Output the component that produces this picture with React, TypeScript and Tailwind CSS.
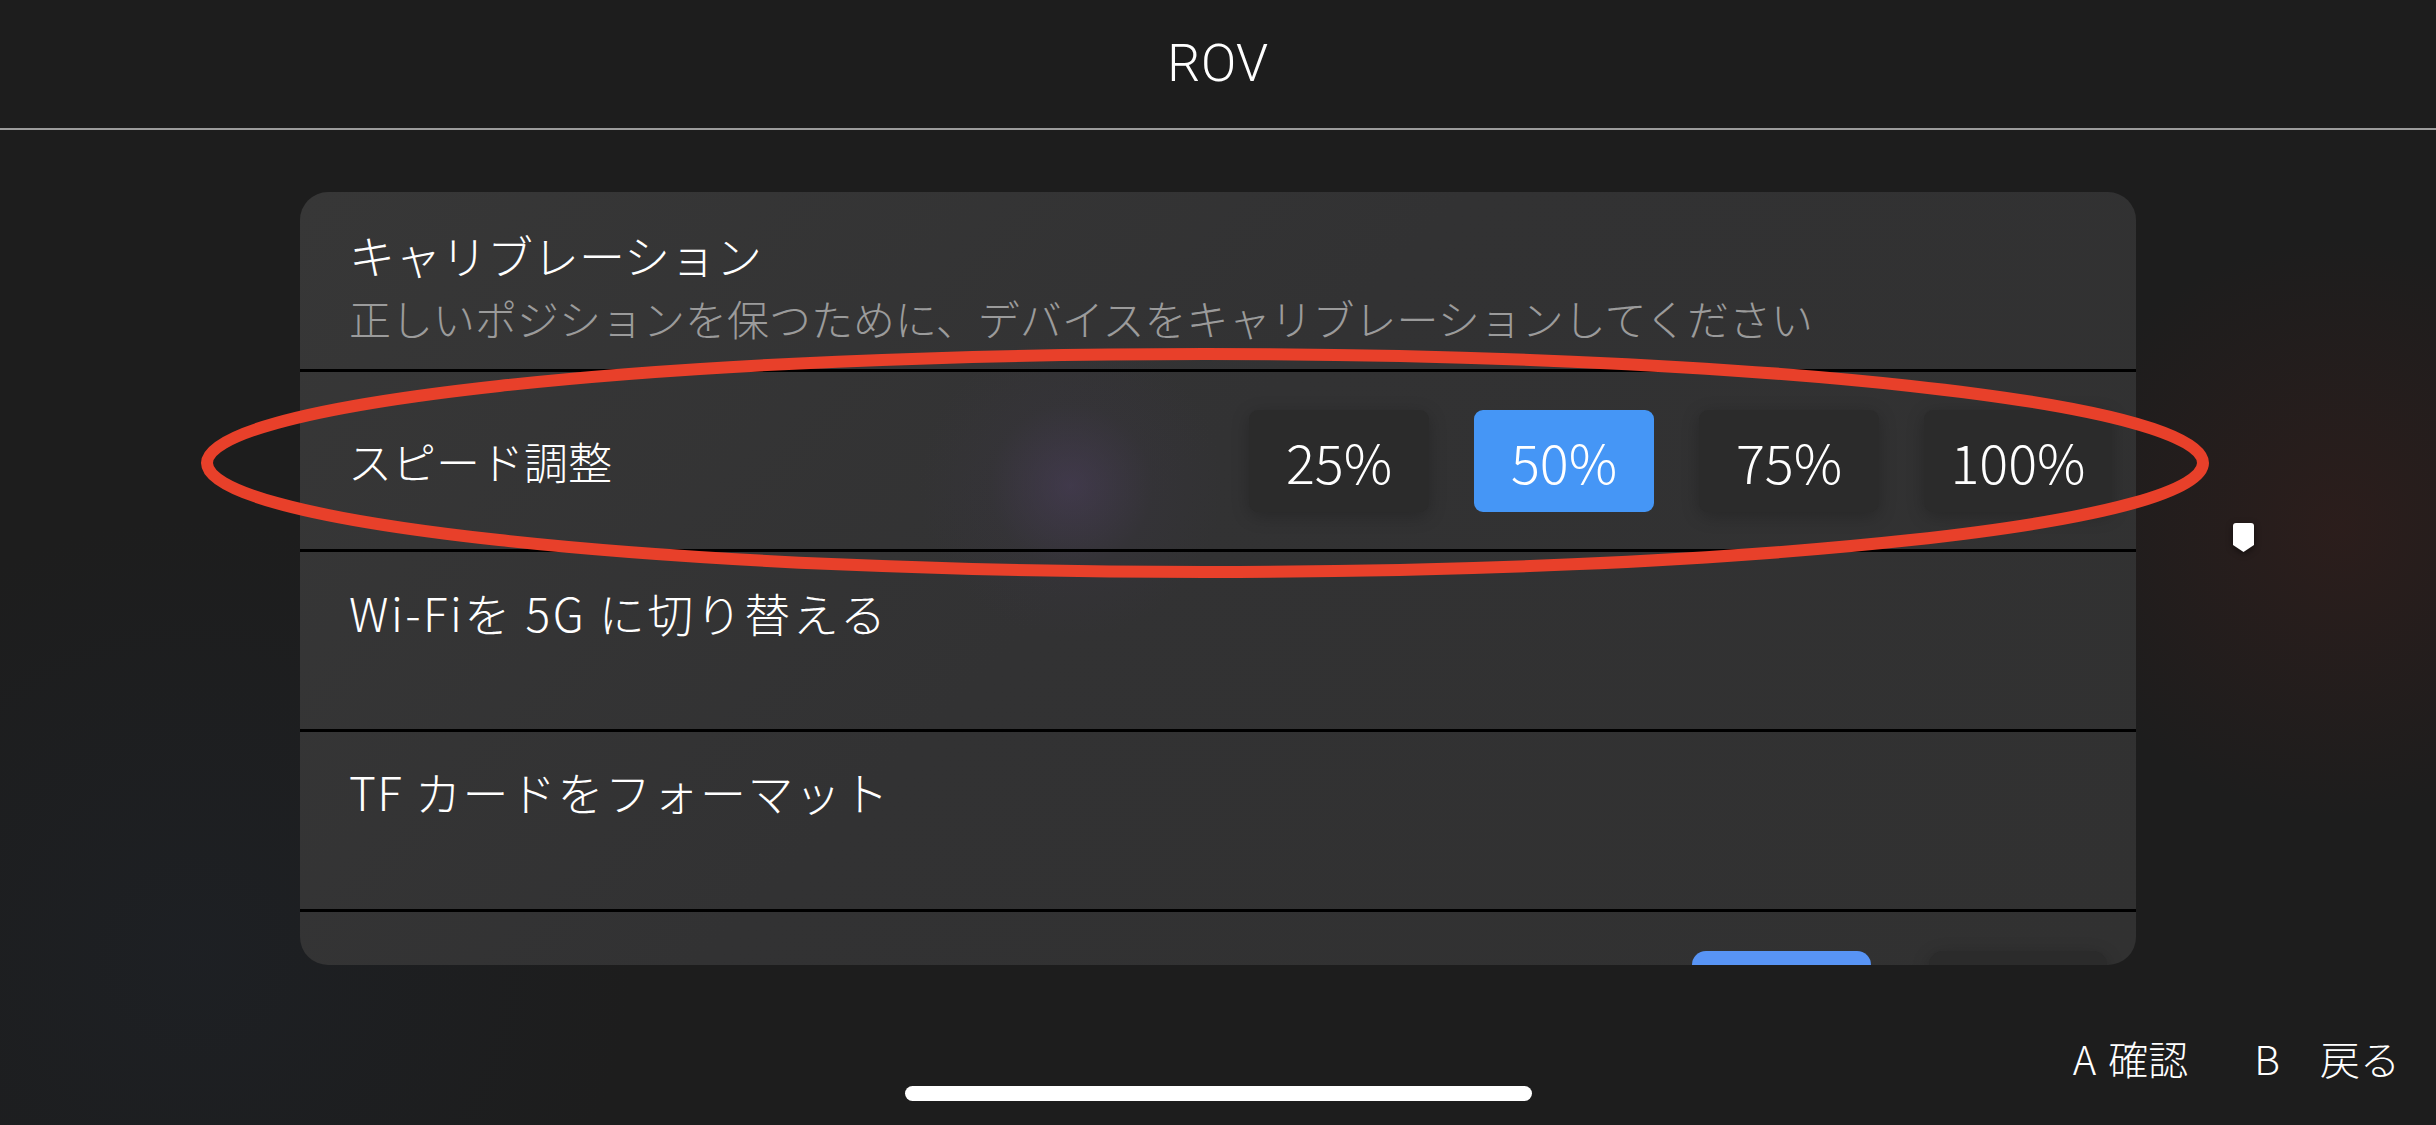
import React from 'react'

const jp = "font-['Noto_Sans_CJK_JP','Noto_Sans',sans-serif]"

function PercentButton({ label, active, wide }: { label: string; active?: boolean; wide?: boolean }) {
  return (
    <div
      className={
        (wide ? 'w-[188px] ' : 'w-[180px] ') +
        'h-[102px] rounded-[9px] flex items-center justify-center text-white text-[54px] font-[\'Liberation_Sans\',sans-serif] ' +
        (active ? 'bg-[#4596f6]' : 'bg-[#2b2b2b] shadow-[0_4px_18px_rgba(0,0,0,0.22)]')
      }
    >
      {label}
    </div>
  )
}

export default function App() {
  return (
    <div className={'relative w-[2436px] h-[1125px] overflow-hidden bg-[#1d1d1d] font-light ' + jp}>
      {/* blurred wallpaper tint */}
      <div className="absolute inset-0 bg-[radial-gradient(circle_at_96%_47%,rgba(70,30,25,0.35)_0%,transparent_12%),radial-gradient(circle_at_8%_85%,rgba(30,40,55,0.25)_0%,transparent_18%)]" />

      <div className="relative flex flex-col h-full">
        {/* Header */}
        <div className="h-[128px] flex items-center justify-center border-b-2 border-[#9c9c9c] box-content">
          <span className="text-white text-[52px] font-light font-['Roboto',sans-serif] leading-none tracking-[0.5px]">ROV</span>
        </div>

        {/* Settings card */}
        <div className="mt-[62px] ml-[300px] w-[1836px] h-[773px] rounded-[28px] overflow-hidden bg-[#333333] bg-[radial-gradient(circle_at_42%_38%,rgba(78,64,98,0.5)_0%,rgba(60,54,70,0.2)_7%,transparent_13%),linear-gradient(135deg,#373737_0%,#323233_45%,#313131_100%)]">
          <div className="h-[180px] border-b-[3px] border-black pl-[49px] pt-[32px]">
            <div className="text-white text-[46px] leading-[60px]">キャリブレーション</div>
            <div className="text-[#9b9b9b] text-[42px] leading-[56px] mt-[6px]">
              正しいポジションを保つために、デバイスをキャリブレーションしてください
            </div>
          </div>

          <div className="h-[180px] border-b-[3px] border-black pl-[48px] pr-[24px] flex items-center justify-between">
            <div className="text-white text-[44px] leading-[60px]">スピード調整</div>
            <div className="flex items-center gap-[45px]">
              <PercentButton label="25%" />
              <PercentButton label="50%" active />
              <PercentButton label="75%" />
              <PercentButton label="100%" wide />
            </div>
          </div>

          <div className="h-[180px] border-b-[3px] border-black pl-[49px] pt-[30px]">
            <div className="text-white text-[46px] leading-[60px] tracking-[2.5px]">Wi-Fiを 5G に切り替える</div>
          </div>

          <div className="h-[180px] border-b-[3px] border-black pl-[49px] pt-[29px]">
            <div className="text-white text-[46px] leading-[60px] tracking-[1.5px]">TF カードをフォーマット</div>
          </div>

          <div className="h-[180px] pl-[48px] pr-[29px] flex items-center justify-end">
            <div className="flex items-center gap-[58px]">
              <div className="w-[179px] h-[102px] rounded-[14px] bg-[#5894f5]" />
              <div className="w-[178px] h-[102px] rounded-[14px] bg-[#2b2b2b] shadow-[0_4px_18px_rgba(0,0,0,0.22)]" />
            </div>
          </div>
        </div>

        {/* Controller hints */}
        <div className="mt-[73px] pr-[36px] flex justify-end items-center text-white text-[40px] leading-[40px]">
          <span>A</span>
          <span className="ml-[12px]">確認</span>
          <span className="ml-[66px]">B</span>
          <span className="ml-[40px]">戻る</span>
        </div>

        {/* Home indicator */}
        <div className="mt-[8px] flex justify-center">
          <div className="w-[627px] h-[15px] rounded-full bg-white" />
        </div>
      </div>

      {/* scroll thumb */}
      <svg className="absolute left-[2233px] top-[523px] drop-shadow-[0_2px_3px_rgba(0,0,0,0.5)]" width="21" height="29" viewBox="0 0 21 29">
        <path d="M3 0H18Q21 0 21 3V22L10.5 29L0 22V3Q0 0 3 0Z" fill="#ffffff" />
      </svg>

      {/* red annotation ellipse */}
      <svg className="absolute inset-0 pointer-events-none" width="2436" height="1125" viewBox="0 0 2436 1125">
        <ellipse cx="1205" cy="463" rx="998" ry="109" fill="none" stroke="#e8402a" strokeWidth="12" />
      </svg>
    </div>
  )
}
